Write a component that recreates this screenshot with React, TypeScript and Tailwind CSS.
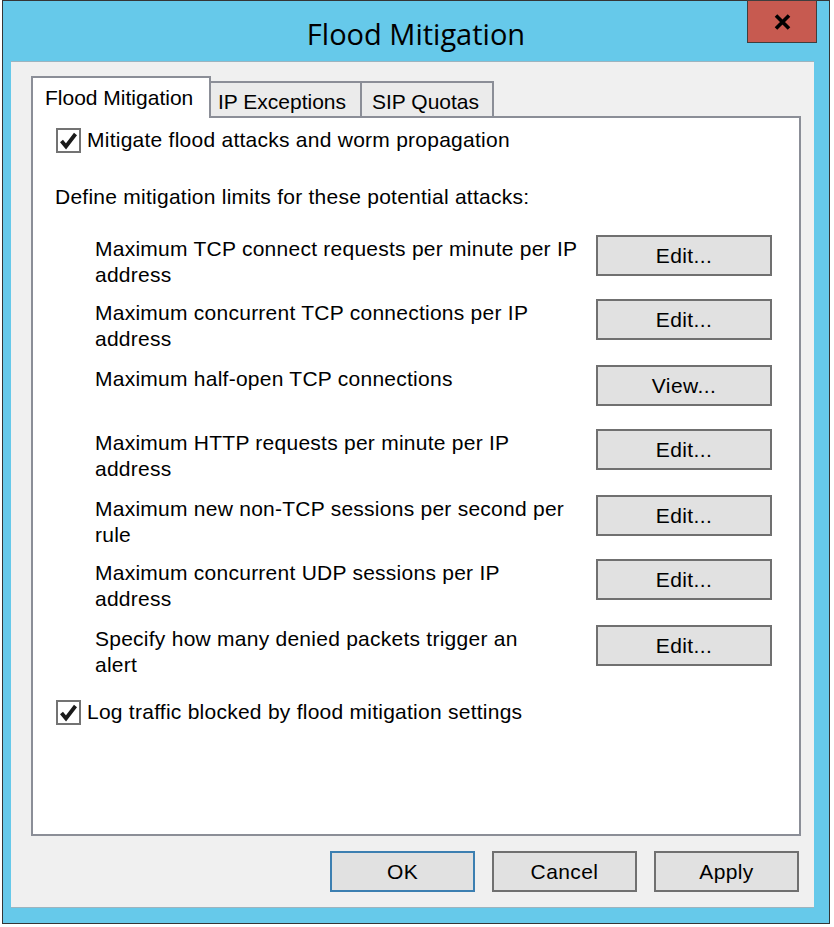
import React from "react";

const font = { fontFamily: '"Liberation Sans", Arial, sans-serif' };

function Check() {
  return (
    <div className="w-[25px] h-[25px] border-2 border-[#737373] bg-white flex items-center justify-center shrink-0">
      <svg width="19" height="19" viewBox="0 0 19 19">
        <path d="M2.5 10 L7 15.5 L16.5 3" fill="none" stroke="#1a1a1a" strokeWidth="3.8" strokeLinejoin="miter" />
      </svg>
    </div>
  );
}

function Btn({ label, w = 176, primary = false }: { label: string; w?: number; primary?: boolean }) {
  return (
    <div
      className={
        "h-[41px] bg-[#e1e1e1] border-2 flex items-center justify-center text-[21px] tracking-[0.4px] text-black shrink-0 " +
        (primary ? "border-[#3c7fb1]" : "border-[#707070]")
      }
      style={{ width: w }}
    >
      {label}
    </div>
  );
}

const rows: { lines: string[]; btn: string }[] = [
  { lines: ["Maximum TCP connect requests per minute per IP", "address"], btn: "Edit..." },
  { lines: ["Maximum concurrent TCP connections per IP", "address"], btn: "Edit..." },
  { lines: ["Maximum half-open TCP connections"], btn: "View..." },
  { lines: ["Maximum HTTP requests per minute per IP", "address"], btn: "Edit..." },
  { lines: ["Maximum new non-TCP sessions per second per", "rule"], btn: "Edit..." },
  { lines: ["Maximum concurrent UDP sessions per IP", "address"], btn: "Edit..." },
  { lines: ["Specify how many denied packets trigger an", "alert"], btn: "Edit..." },
];

export default function App() {
  return (
    <div className="w-[834px] h-[927px] bg-white overflow-hidden" style={font}>
      <div className="ml-[2px] w-[828px] h-[924px] border border-[#353535] bg-[#66c9ea] relative flex flex-col">
        {/* close button */}
        <div className="absolute left-[744px] top-[-1px] w-[70px] h-[43px] bg-[#c75a50] border border-[#3e3e3e] flex items-center justify-center">
          <svg width="17" height="16" viewBox="0 0 17 16">
            <path d="M2 1.5 L15 14.5 M15 1.5 L2 14.5" stroke="#000" strokeWidth="3.6" />
          </svg>
        </div>
        {/* title */}
        <div className="h-[60px] flex items-center justify-center text-[29px] text-black pt-[5px]" style={{ fontFamily: '"Open Sans", "Noto Sans", sans-serif' }}>
          Flood Mitigation
        </div>
        {/* client area */}
        <div className="ml-[8px] w-[803px] h-[847px] bg-[#f0f0f0] border-t border-b border-[#9db4bf] flex flex-col">
          {/* tabs */}
          <div className="ml-[20px] mt-[14px] h-[40px] flex items-end text-[21px] text-black">
            <div className="relative z-10 w-[180px] h-[42px] -mb-[2px] bg-white border-x-2 border-t-2 border-[#8b8e97] pl-[12px] pt-[4px] whitespace-nowrap">
              Flood Mitigation
            </div>
            <div className="w-[151px] h-[35px] bg-[#ebebeb] border-t-2 border-r-2 border-[#8b8e97] pl-[7px] pt-[3px] whitespace-nowrap">
              IP Exceptions
            </div>
            <div className="w-[132px] h-[35px] bg-[#ebebeb] border-t-2 border-r-2 border-[#8b8e97] pl-[10px] pt-[3px] whitespace-nowrap">
              SIP Quotas
            </div>
          </div>
          {/* panel */}
          <div className="ml-[20px] w-[770px] h-[720px] bg-white border-2 border-[#8b8e97] flex flex-col text-[21px] tracking-[0.25px] leading-[26px] text-black">
            <div className="ml-[23px] mt-[9px] flex items-center gap-[6px]">
              <Check />
              <span>Mitigate flood attacks and worm propagation</span>
            </div>
            <div className="ml-[22px] mt-[31px]">Define mitigation limits for these potential attacks:</div>
            <div className="mt-[25px] flex flex-col">
              {rows.map((r, i) => (
                <div key={i} className={(i % 2 === 0 ? "h-[64px]" : "h-[66px]") + " flex items-start"}>
                  <div className="ml-[62px] w-[501px] whitespace-nowrap pt-[1px]">
                    {r.lines.map((l, j) => (
                      <div key={j}>{l}</div>
                    ))}
                  </div>
                  <Btn label={r.btn} />
                </div>
              ))}
            </div>
            <div className="ml-[23px] mt-[10px] flex items-center gap-[6px]">
              <Check />
              <span>Log traffic blocked by flood mitigation settings</span>
            </div>
          </div>
          {/* bottom buttons */}
          <div className="mt-[15px] mr-[15px] flex justify-end gap-[17px]">
            <Btn label="OK" w={145} primary />
            <Btn label="Cancel" w={145} />
            <Btn label="Apply" w={145} />
          </div>
        </div>
      </div>
    </div>
  );
}
